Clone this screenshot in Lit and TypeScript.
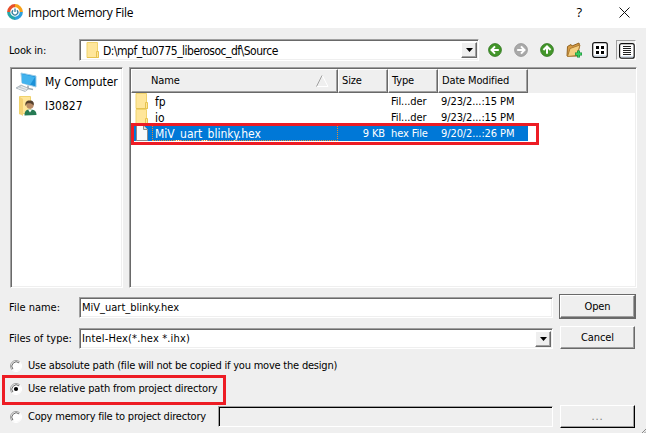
import { LitElement, html, svg, css } from "lit";
import { customElement } from "lit/decorators.js";

const folder = html`<svg class="folder" width="14" height="16" viewBox="0 0 14 16">
  <path d="M1 .5h10.500v15H1z" fill="#ffe69a" stroke="#f0d36e" />
  <path d="M10.500 9.500h2v6h-2z" fill="#ffe69a" stroke="#e6c350" /><path d="M1 15.500h11.500" stroke="#e6c350" />
</svg>`;

const round = (color: string, edge: string, angle: number) => html`<svg width="14" height="14" viewBox="0 0 14 14">
  <circle cx="7" cy="7" r="6.400" fill=${color} stroke=${edge} stroke-width=".8" />
  ${svg`<path transform="rotate(${angle} 7 7)" d="M10.800 7H4M7 3.400 3.500 7 7 10.600" fill="none" stroke="#fff" stroke-width="2" />`}
</svg>`;

const down = html`<span class="drop"><svg width="7" height="4" viewBox="0 0 7 4"><path d="M0 0h7L3.500 4z" /></svg></span>`;

const radio = (on: boolean) => html`<svg class="radio" width="12" height="12" viewBox="0 0 12 12">
  <circle cx="6" cy="6" r="5" fill="#fff" />
  <path d="M2.100 9.900A5.500 5.500 0 0 1 9.900 2.100" fill="none" stroke="#a0a0a0" />
  <path d="M2.900 9.100A4.400 4.400 0 0 1 9.100 2.900" fill="none" stroke="#696969" />
  <path d="M2.100 9.900A5.500 5.500 0 0 0 9.900 2.100" fill="none" stroke="#fff" />
  ${on ? svg`<circle cx="6" cy="6" r="2.100" fill="#000" />` : ""}
</svg>`;

@customElement("app-root")
export class AppRoot extends LitElement {
  static styles = css`
    :host { display: block; width: 646px; height: 433px; overflow: hidden; background: #efefef; position: relative;
      color: #000; font: 11px/14px "DejaVu Sans Condensed", "DejaVu Sans", sans-serif; font-stretch: condensed; }
    * { box-sizing: border-box; }
    svg { display: block; flex: none; }
    span { white-space: pre; }
    .title { height: 28px; background: #fff; display: flex; align-items: center; padding: 0 16px 4px 7px;
      font: 12px/16px "Open Sans", "Noto Sans", sans-serif; }
    .title .name { margin-left: 5px; flex: 1; letter-spacing: -.28px; padding-top: 2px; }
    .title .help { margin-right: 37px; font-size: 13px; }
    .look { height: 39px; display: flex; align-items: center; padding: 5px 10px 0 9px; }
    .lbl { width: 70px; flex: none; letter-spacing: 0; }
    .t-look { letter-spacing: -.2px; padding-top: 2px; }
    .sunk { background: #fff; border: 1px solid #a0a0a0; border-right-color: #fff; border-bottom-color: #fff;
      box-shadow: inset 1px 1px #696969, inset -1px -1px #efefef; display: flex; align-items: center; }
    .look .sunk { flex: none; width: 400px; height: 22px; padding-left: 6px; margin-right: 9px; }
    .path { flex: 1; margin-left: 3px; }
    .t-path { letter-spacing: -.5px; padding-top: 2px; }
    .drop { width: 16px; height: 16px; margin-right: 1px; background: #efefef; border: 1px solid #fff;
      border-right-color: #696969; border-bottom-color: #696969; box-shadow: inset -1px -1px #a0a0a0; display: grid; place-items: center; }
    .tools { display: flex; align-items: center; gap: 12px; flex: none; }
    .tools .tiles { margin-left: -2px; }
    .pressed { width: 20px; height: 20px; border: 1px solid #a0a0a0; border-right-color: #fff; border-bottom-color: #fff; padding: 1px; margin-left: -4px; }
    .views { display: flex; height: 221px; padding-left: 10px; gap: 6px; }
    .side { width: 113px; height: 221px; flex-direction: column; align-items: flex-start; padding: 2px 0 0 5px; }
    .place { display: flex; align-items: center; height: 24px; gap: 7px; }
    .big { font-size: 12px; }
    .list { width: 508px; height: 221px; flex-direction: column; align-items: stretch; padding: 1px; }
    .grid { display: grid; grid-template-columns: 207px 50px 50px 90px 1fr; }
    .head { height: 24px; background: #efefef; }
    .cell { border: 1px solid #fff; border-right-color: #696969; border-bottom-color: #696969;
      box-shadow: inset -1px -1px #a0a0a0; padding: 0 8px 1px 3px; display: flex; align-items: center; justify-content: space-between; letter-spacing: -.15px; }
    .cell:first-child { padding-left: 19px; }
    .row { height: 16px; line-height: 18px; letter-spacing: -.1px; }
    .row > span { height: 16px; padding-left: 3px; }
    .row .file { display: flex; align-items: center; padding-left: 4px; }
    .file .big { margin-left: 3px; padding-left: 3px; flex: 1; height: 16px; line-height: 18px; letter-spacing: 0; }
    .row .size { text-align: right; padding-right: 3px; }
    .sel > span { background: #0078d7; color: #fff; }
    .sel > .none { background: #fff; }
    .sel .big { outline: 1px dotted #e78a35; outline-offset: -1px; }
    .form { display: flex; padding: 6px 10px 0 9px; height: 66px; }
    .fields { width: 544px; }
    .line { display: flex; align-items: center; height: 21px; margin: 3px 0 10px; }
    .line .sunk { width: 474px; height: 21px; padding-left: 2px; }
    .t-hex { margin-left: 0; padding-top: 1px; letter-spacing: .15px; }
    .btns { margin-left: 6px; }
    .btn { width: 75px; height: 23px; margin-left: 1px; border: 1px solid #fff; border-right-color: #696969; border-bottom-color: #696969;
      box-shadow: inset -1px -1px #a0a0a0; display: grid; place-items: center; padding-bottom: 0; letter-spacing: -.1px; }
    .open { margin: 1px 0 8px 1px; outline: 1px solid #696969; }
    .opt { display: flex; align-items: center; height: 23px; padding-left: 10px; letter-spacing: -.21px; }
    .opt > span { padding-top: 1px; }
    .opt .t-rel { letter-spacing: -.15px; }
    .radio { margin-right: 6px; }
    .opt .off { background: #efefef; width: 335px; height: 21px; box-shadow: inset 1px 1px #000; }
    .opt .btn { margin-left: 7px; color: #777; border-right-color: #000; border-bottom-color: #000; letter-spacing: .8px; }
    .copy { margin-top: 5px; }
    .copy .txt { width: 190px; }
    .mark { position: absolute; border: 3px solid #ed1c24; }
    .m1 { left: 131px; top: 123px; width: 408px; height: 22px; }
    .m2 { left: 2px; top: 375px; width: 224px; height: 30px; }
    .grip { position: absolute; right: 0; bottom: 0; }
  `;

  render() {
    const file = (icon: unknown, name: string, size: string, type: string, date: string, sel = false) => html`
      <div class="grid row ${sel ? "sel" : ""}">
        <span class="file">${icon}<span class="big">${name}</span></span>
        <span class="size">${size}</span><span class="type">${type}</span><span class="date">${date}</span><span class="none"></span>
      </div>`;
    return html`
      <div class="title">
        <svg width="16" height="16" viewBox="0 0 16 16" fill="none" stroke-width="3.200">
          <path d="M8 1.700A6.300 6.300 0 0 1 14.300 8" stroke="#f6a21b" />
          <path d="M14.300 8A6.300 6.300 0 0 1 8 14.300" stroke="#2e9fdc" />
          <path d="M8 14.300A6.300 6.300 0 0 1 1.700 8" stroke="#25a6a8" />
          <path d="M1.700 8A6.300 6.300 0 0 1 8 1.700" stroke="#e8502a" />
          <path d="M6 6.200a2.800 2.800 0 1 0 4 0M8 4.500v3.500" stroke="#357f9e" stroke-width="1.300" />
        </svg>
        <span class="name">Import Memory File</span><span class="help">?</span>
        <svg width="11" height="11" viewBox="0 0 11 11"><path d="M.5.5l10 10M10.500.5l-10 10" stroke="#111" /></svg>
      </div>
      <div class="look">
        <span class="lbl t-look">Look in:</span>
        <div class="sunk">${folder}<span class="path big t-path">D:\\mpf_tu0775_liberosoc_df\\Source</span>${down}</div>
        <div class="tools">
          ${round("#43962a", "#2b741b", 0)}${round("#a9a9a9", "#929292", 180)}${round("#43962a", "#2b741b", 90)}
          <svg width="16" height="16" viewBox="0 0 16 16">
            <path d="M1 14 1.500 4.500 5 2.500l1 1.500 7-3 .5 3L11 14z" fill="#d79b43" stroke="#916422" />
            <path d="M1.500 14.500 4 6.500l10-3.500-3 10.500z" fill="#f5cf80" stroke="#a87630" stroke-width=".9" />
            <path d="M12.500 8.500v7M9 12h7" stroke="#148532" stroke-width="3" /><path d="M12.500 9v6M9.500 12h6" stroke="#37c95d" stroke-width="1.800" />
          </svg>
          <svg class="tiles" width="16" height="16" viewBox="0 0 16 16">
            <rect x=".7" y=".7" width="14.600" height="14.600" rx="2" fill="#fff" stroke="#111" stroke-width="1.200" />
            <path d="M2 13.800h12" stroke="#c5d6e8" /><path d="M4 4h3v3H4zM9 4h3v3H9zM4 9h3v3H4zM9 9h3v3H9z" />
          </svg>
          <div class="pressed"><svg width="17" height="17" viewBox="0 0 17 17">
            <rect x="1.600" y="1.600" width="14.600" height="14.600" rx="2" fill="#fff" stroke="#111" stroke-width="1.200" />
            <path d="M3 14.800h12" stroke="#c5d6e8" /><path d="M5 4.500h8M5 6.500h8M5 8.500h8M5 10.500h8M5 12.500h8" stroke="#222" />
          </svg></div>
        </div>
      </div>
      <div class="views">
        <div class="sunk side">
          <div class="place"><svg width="22" height="21" viewBox="0 0 22 21">
            <path d="M5 1 20 4v11L6 11z" fill="#1b91d8" stroke="#9ccde8" />
            <path d="M6 2l13 3-5 8-8-2z" fill="#42b3ee" /><path d="M12 13.500v3l5 1" fill="none" stroke="#9ba7ae" stroke-width="1.500" />
            <path d="M0 16 5 13l8 3.500-4 3z" fill="#c6cdd2" stroke="#929fa8" stroke-width=".6" /><path d="M2 16l8 2.500M5 14.500l6 2.300" stroke="#fff" stroke-width=".7" />
          </svg><span class="big t-comp">My Computer</span></div>
          <div class="place"><svg width="22" height="22" viewBox="0 0 22 22">
            <path d="M3.500 1.500h11V18l-11 1z" fill="#ffe69a" stroke="#f0d36e" /><path d="M4 2l3 2v17l-3-2z" fill="#f5d275" />
            <path d="M8.500 20.500c0-5 2-6 5.500-6s6.500 1 6.500 5.500z" fill="#267a53" /><path d="M12 14.500h4l-2 3z" fill="#fff" />
            <circle cx="14" cy="10" r="3.700" fill="#b88b66" /><path d="M9.500 11C8.500 6 12 5 14 5.500c3 0 4.500 2 3.500 5C16 8 13 8 11 8.500z" fill="#54402d" />
          </svg><span class="big t-user">I30827</span></div>
        </div>
        <div class="sunk list">
          <div class="grid head">
            <div class="cell"><span>Name</span><svg width="13" height="12" viewBox="0 0 13 12"><path d="M1 11.500h11L6.500 1" fill="none" stroke="#fff" /><path d="M.5 11.500 6 .5" stroke="#a0a0a0" /></svg></div>
            <div class="cell"><span>Size</span></div><div class="cell"><span>Type</span></div><div class="cell"><span>Date Modified</span></div>
          </div>
          ${file(folder, "fp", "", "Fil...der", "9/23/2...:15 PM")}
          ${file(folder, "io", "", "Fil...der", "9/23/2...:15 PM")}
          ${file(html`<svg width="14" height="16" viewBox="0 0 14 16"><path d="M1.500.5h7l4 4v11h-11z" fill="#fafafa" stroke="#8b8b8b" /><path d="M8.500.5v4h4" fill="#ddd" stroke="#8b8b8b" /></svg>`, "MiV_uart_blinky.hex", "9 KB", "hex File", "9/20/2...:26 PM", true)}
        </div>
      </div>
      <div class="form">
        <div class="fields">
          <div class="line"><span class="lbl">File name:</span><div class="sunk"><span class="t-file">MiV_uart_blinky.hex</span></div></div>
          <div class="line"><span class="lbl">Files of type:</span><div class="sunk"><span class="path t-hex">Intel-Hex(*.hex *.ihx)</span>${down}</div></div>
        </div>
        <div class="btns"><div class="btn open">Open</div><div class="btn">Cancel</div></div>
      </div>
      <div class="opts">
        <div class="opt">${radio(false)}<span class="t-abs">Use absolute path (file will not be copied if you move the design)</span></div>
        <div class="opt">${radio(true)}<span class="t-rel">Use relative path from project directory</span></div>
        <div class="opt copy">${radio(false)}<span class="txt">Copy memory file to project directory</span><div class="sunk off"></div><div class="btn">...</div></div>
      </div>
      <div class="mark m1"></div><div class="mark m2"></div>
      <svg class="grip" width="4" height="4" viewBox="0 0 4 4"><path d="M0 4 4 0M2.500 4 4 2.500" stroke="#888" /></svg>`;
  }
}
